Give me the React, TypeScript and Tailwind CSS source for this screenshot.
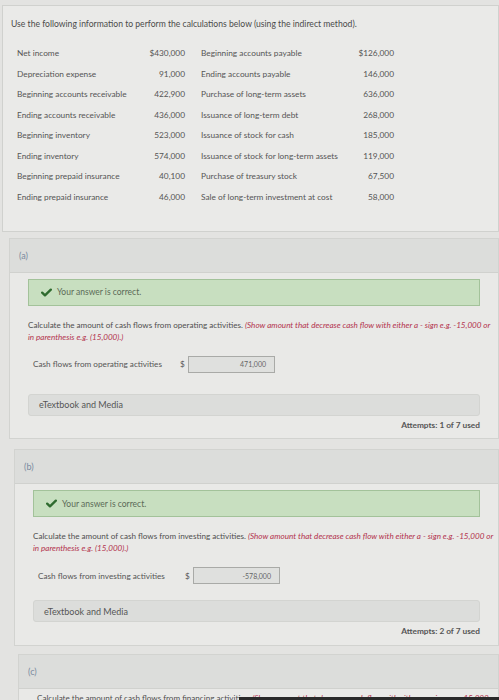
import React from "react";

const left = [
  { label: "Net income", value: "$430,000" },
  { label: "Depreciation expense", value: "91,000" },
  { label: "Beginning accounts receivable", value: "422,900" },
  { label: "Ending accounts receivable", value: "436,000" },
  { label: "Beginning inventory", value: "523,000" },
  { label: "Ending inventory", value: "574,000" },
  { label: "Beginning prepaid insurance", value: "40,100" },
  { label: "Ending prepaid insurance", value: "46,000" },
];

const right = [
  { label: "Beginning accounts payable", value: "$126,000" },
  { label: "Ending accounts payable", value: "146,000" },
  { label: "Purchase of long-term assets", value: "636,000" },
  { label: "Issuance of long-term debt", value: "268,000" },
  { label: "Issuance of stock for cash", value: "185,000" },
  { label: "Issuance of stock for long-term assets", value: "119,000" },
  { label: "Purchase of treasury stock", value: "67,500" },
  { label: "Sale of long-term investment at cost", value: "58,000" },
];

function Check() {
  return (
    <svg width="11" height="9" viewBox="0 0 12 10" className="shrink-0">
      <path d="M1.2 5.2 L4.3 8.2 L10.8 1.8" fill="none" stroke="#2f6b2f" strokeWidth="2.6" strokeLinecap="round" strokeLinejoin="round" />
    </svg>
  );
}

function Part({
  tag,
  activity,
  answer,
  attempts,
  indent,
  mediaGap,
}: {
  tag: string;
  activity: string;
  answer: string;
  attempts: string;
  indent: string;
  mediaGap: string;
}) {
  return (
    <div className={`${indent} border border-[#d2d3d0] bg-[#e9e9e7]`}>
      <div className="h-[34px] flex items-center px-[9px] bg-[#dcdddb] border-b border-[#d0d1ce] text-[9px] text-[#7a8aa0]">
        ({tag})
      </div>
      <div className="px-[18px] pt-[6px] pb-[7px]">
        <div className="h-[27px] flex items-center gap-[5px] pl-[12px] bg-[#c8dfc0] border border-[#a3c29a] text-[8.5px] text-[#5b6a57]">
          <Check />
          <span>Your answer is correct.</span>
        </div>
        <div className="mt-[13px] text-[8.1px] leading-[12px] text-[#4f4f4f]">
          <div className="whitespace-nowrap">
            <span>Calculate the amount of cash flows from {activity} activities. </span>
            <span className="italic text-[#b3334d]">
              (Show amount that decrease cash flow with either a - sign e.g. -15,000 or
            </span>
          </div>
          <div className="italic text-[#b3334d]">in parenthesis e.g. (15,000).)</div>
        </div>
        <div className="mt-[13px] flex items-center pl-[5px] text-[8.2px] text-[#555]">
          <span className="w-[147px]">Cash flows from {activity} activities</span>
          <span className="w-[8px]">$</span>
          <div className="w-[87px] h-[17px] border border-[#a9aaa7] bg-[#dfe0de] flex items-center justify-end pr-[8px] text-[7px] text-[#666]">
            {answer}
          </div>
        </div>
        <div className={`${mediaGap} h-[22px] flex items-center px-[10px] bg-[#dcdddb] rounded-[3px] border border-[#d3d4d1] text-[9px] text-[#555]`}>
          eTextbook and Media
        </div>
        <div className="mt-[3px] text-right text-[8.3px] font-bold text-[#555]">{attempts}</div>
      </div>
    </div>
  );
}

export default function App() {
  return (
    <div
      className="w-[499px] h-[700px] overflow-hidden bg-[#e3e3e1] relative"
      style={{ fontFamily: "Lato, 'Liberation Sans', sans-serif" }}
    >
      {/* Given data */}
      <div className="mt-[5px] ml-[2px] h-[227px] border border-[#d0d1ce] bg-[#eaeae8] pt-[12px] pl-[8px]">
        <p className="text-[8.6px] text-[#4a4a4a]">
          Use the following information to perform the calculations below (using the indirect method).
        </p>
        <div className="mt-[17px] ml-[6px] flex text-[8.3px] text-[#555]">
          <div className="flex flex-col gap-[9.5px]">
            {left.map((r) => (
              <div key={r.label} className="flex h-[11px] items-center">
                <span className="w-[128px]">{r.label}</span>
                <span className="w-[40px] text-right">{r.value}</span>
              </div>
            ))}
          </div>
          <div className="ml-[16px] flex flex-col gap-[9.5px]">
            {right.map((r) => (
              <div key={r.label} className="flex h-[11px] items-center">
                <span className="w-[150px]">{r.label}</span>
                <span className="w-[43px] text-right">{r.value}</span>
              </div>
            ))}
          </div>
        </div>
      </div>

      <div className="mt-[6px]">
        <Part
          tag="a"
          activity="operating"
          answer="471,000"
          attempts="Attempts: 1 of 7 used"
          indent="ml-[9px]"
          mediaGap="mt-[21px]"
        />
      </div>
      <div className="mt-[10px]">
        <Part
          tag="b"
          activity="investing"
          answer="-578,000"
          attempts="Attempts: 2 of 7 used"
          indent="ml-[14px]"
          mediaGap="mt-[16px]"
        />
      </div>

      {/* Part (c), cut off */}
      <div className="mt-[8px] ml-[18px] border border-[#d2d3d0] bg-[#e9e9e7]">
        <div className="h-[34px] flex items-center px-[9px] bg-[#dcdddb] border-b border-[#d0d1ce] text-[9px] text-[#7a8aa0]">
          (c)
        </div>
        <div className="mt-[3px] px-[18px] text-[8.1px] leading-[12px] text-[#4f4f4f] whitespace-nowrap">
          <span>Calculate the amount of cash flows from financing activities. </span>
          <span className="italic text-[#b3334d]">(Show amount that decrease cash flow with either a - sign e.g. -15,000 or</span>
        </div>
      </div>
      <div className="absolute bottom-0 right-0 w-[260px] h-[3px] bg-[#2a2a2a]" />
    </div>
  );
}
